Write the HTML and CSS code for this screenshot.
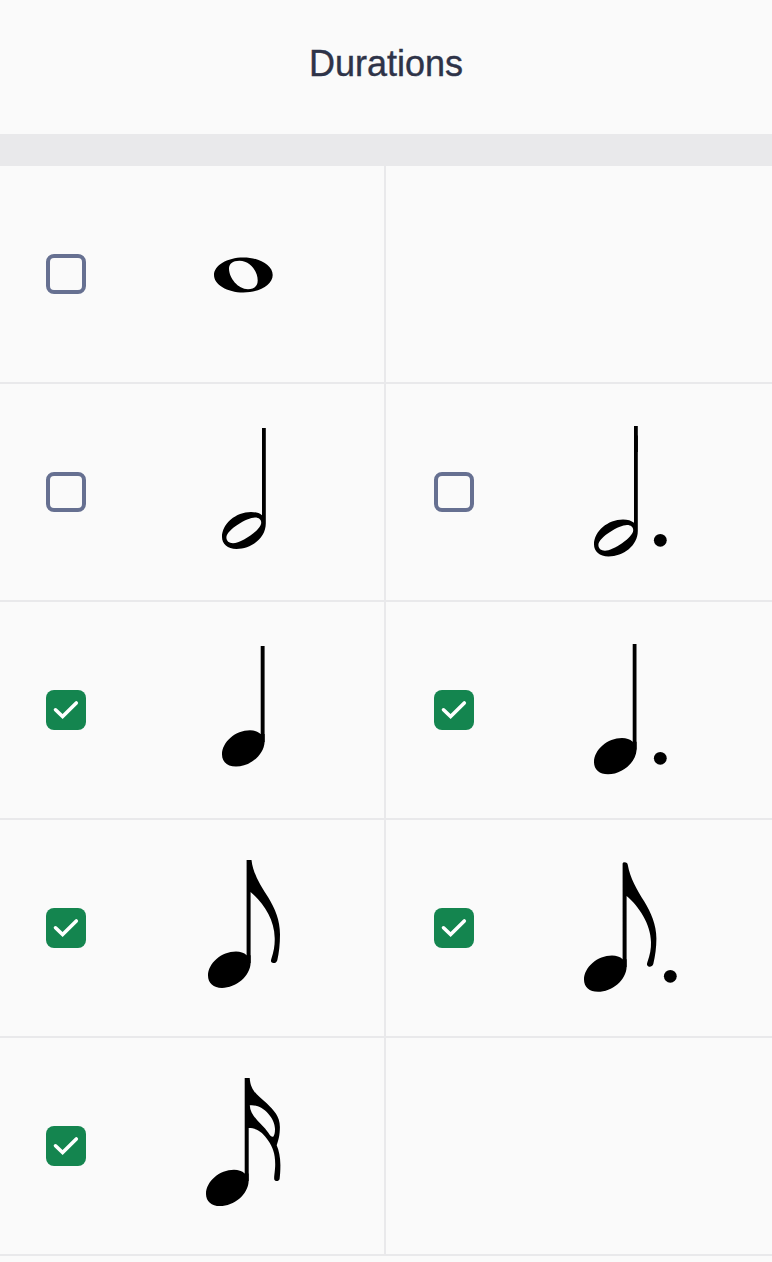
FILE: index.html
```html
<!DOCTYPE html>
<html lang="en">
<head>
<meta charset="utf-8">
<title>Durations</title>
<link rel="stylesheet" href="styles.css">
</head>
<body>
<svg class="defs" aria-hidden="true">
  <defs>
    <path id="head" d="M80.600 111V112C80 125 66 136.600 52 136.600C43.500 136.600 38 131.700 38 124.500C38 112 51.500 100.300 66 100.300C70.300 100.300 74 101.500 76.700 104L80.600 104Z"/>
    <path id="half" fill-rule="evenodd" d="M78 16H81.800V111.500C81.800 126 67.500 136.900 52.500 136.900C43.500 136.900 38 132 38 125C38 111.500 52 99.900 67 99.900C71.500 99.900 75.500 101 78 103.300ZM77.200 110.700C77.200 107.700 75 105.600 71 105.600C63 105.600 42.400 118 42.400 125.500C42.400 129 45 131.200 49 131.200C57 131.200 77.200 118 77.200 110.700Z"/>
    <path id="check" d="M9.500 19.800L16.600 26.600L30.300 13"/>
  </defs>
</svg>
<header class="header"><h1 class="title">Durations</h1></header>
<div class="band"></div>
<main class="grid">
  <div class="cell">
    <span class="box"></span>
    <svg class="note" viewBox="0 0 120 160"><path fill-rule="evenodd" d="M30 81C30 71.500 43 63.400 59.300 63.400S88.700 71.500 88.700 81S75.600 98.500 59.300 98.500S30 90.600 30 81ZM45 74.500C45 70 48.500 66.700 55.500 66.700C66 66.700 73.700 77 73.700 86.500C73.700 92.500 69.500 95.200 64 95.200C54 95.200 45 84 45 74.500Z"/></svg>
  </div>
  <div class="cell"></div>

  <div class="cell">
    <span class="box"></span>
    <svg class="note" viewBox="0 0 120 160"><use href="#half"/></svg>
  </div>
  <div class="cell">
    <span class="box"></span>
    <svg class="note" viewBox="0 0 120 160"><path d="M63 14H66.800V40H63Z"/><use href="#half" x="-15" y="7.500"/><circle cx="89.300" cy="128.300" r="6.400"/></svg>
  </div>

  <div class="cell">
    <span class="box checked"><svg class="tick" viewBox="0 0 40 40"><use href="#check"/></svg></span>
    <svg class="note" viewBox="0 0 120 160"><path d="M76.700 16H80.600V112H76.700Z"/><use href="#head"/></svg>
  </div>
  <div class="cell">
    <span class="box checked"><svg class="tick" viewBox="0 0 40 40"><use href="#check"/></svg></span>
    <svg class="note" viewBox="0 0 120 160"><path d="M61.700 14H65.500V119.500H61.700Z"/><use href="#head" x="-15" y="7.700"/><circle cx="89.300" cy="128.300" r="6.400"/></svg>
  </div>

  <div class="cell">
    <span class="box checked"><svg class="tick" viewBox="0 0 40 40"><use href="#check"/></svg></span>
    <svg class="note" viewBox="0 0 120 160"><path d="M62.600 12H67.500C69 26 77 38 84.300 49.500C91 60.500 96 72 96 86.500C96 96 95 105 93.300 112.200C92.500 115 90 115.500 88.500 114.800C87 114.200 86.600 113 87.300 111C90 103 90.900 97 90.700 90C90.500 71 79 54.500 66.600 44V115H62.600Z"/><use href="#head" x="-14" y="3.300"/></svg>
  </div>
  <div class="cell">
    <span class="box checked"><svg class="tick" viewBox="0 0 40 40"><use href="#check"/></svg></span>
    <svg class="note" viewBox="0 0 120 160"><path d="M51.600 15.500Q51.800 14.200 53.500 14.200Q56.500 14.200 56.800 17C59 30 66 42 73.300 53.500C80 64.500 85.400 77 85.400 90.500C85.400 99 84.300 108 82.300 116C81.500 118.600 79 119.200 77.500 118.500C76 117.800 75.600 116.500 76.300 114.500C79 107 80.200 101 80 94C79.700 76 68 58.500 55.600 48V119H51.600Z"/><use href="#head" x="-25" y="7.200"/><circle cx="99.300" cy="128.300" r="6.400"/></svg>
  </div>

  <div class="cell">
    <span class="box checked"><svg class="tick" viewBox="0 0 40 40"><use href="#check"/></svg></span>
    <svg class="note" viewBox="0 0 120 160"><path fill-rule="evenodd" d="M60.700 12H65.700C66.500 26 75 30 82.700 37.300C90 44.500 95.900 50.500 95.900 61C95.900 69 94.500 74 92.700 79.300C95 85 96.300 91 96.400 99C96.400 105 96.100 109 95.600 113C94.700 115.600 91.300 115.600 90.300 113.500C89.700 111.500 91.200 105 91.200 98C91.200 87 88.500 81 84.300 74.700C79 67 74 62 64.700 62V115H60.700ZM65.800 39.300C77 37.500 91 51 91 63C91 67 90.300 69 89.400 70.600Q87.500 71.800 84.500 67C78 57.500 66 50.500 65.800 39.300Z"/><use href="#head" x="-16" y="3.400"/></svg>
  </div>
  <div class="cell"></div>
</main>
</body>
</html>
```
FILE: styles.css
```css
* { box-sizing: border-box; }
body {
  margin: 0;
  background: #fafafa;
  color: #2e3348;
  font-family: "Liberation Sans", Arial, sans-serif;
}
.defs { display: none; }
.header {
  height: 134px;
  display: flex;
  justify-content: center;
  padding-top: 43px;
}
.title {
  margin: 0;
  font-size: 36px;
  line-height: 42px;
  font-weight: 400;
  letter-spacing: 0;
  -webkit-text-stroke: 0.4px #2e3348;
}
.band { height: 32px; background: #e9e9eb; }
.grid {
  display: grid;
  grid-template-columns: 386px 386px;
  grid-auto-rows: 218px;
}
.cell {
  display: flex;
  align-items: center;
  gap: 98px;
  padding-left: 46px;
  border-bottom: 2px solid #e9e9eb;
}
.cell:nth-child(odd) { border-right: 2px solid #e9e9eb; }
.cell:nth-child(even) { padding-left: 48px; gap: 97px; }
.box {
  width: 40px;
  height: 40px;
  flex: none;
  border: 4px solid #667091;
  border-radius: 8px;
}
.checked { border: 0; background: #14854f; }
.tick {
  display: block;
  width: 40px;
  height: 40px;
  fill: none;
  stroke: #fff;
  stroke-width: 3.6;
  stroke-linecap: round;
}
.note { width: 120px; height: 160px; flex: none; fill: #000; }
```
